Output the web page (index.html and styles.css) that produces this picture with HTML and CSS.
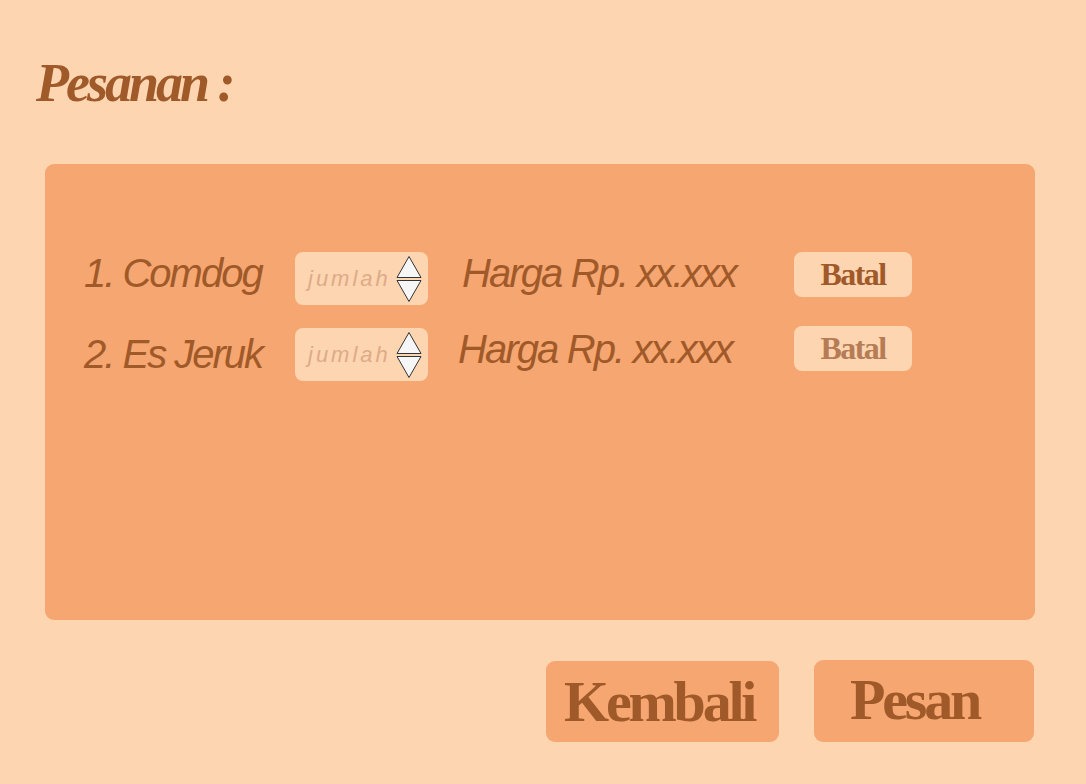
FILE: index.html
```html
<!DOCTYPE html>
<html lang="id">
<head>
<meta charset="utf-8">
<title>Pesanan</title>
<link rel="stylesheet" href="styles.css">
</head>
<body>
<div class="page">
  <h1 class="title">Pesanan :</h1>
  <div class="panel">
    <div class="row">
      <div class="name">1. Comdog</div>
      <div class="qty">
        <span class="qty-placeholder">jumlah</span>
        <svg class="spin" width="28" height="48" viewBox="0 0 28 48">
          <polygon points="14,1.5 2,22.5 26,22.5" fill="#f6f6f6" stroke="#333" stroke-width="1"/>
          <polygon points="2,25.5 26,25.5 14,46.5" fill="#f6f6f6" stroke="#333" stroke-width="1"/>
        </svg>
      </div>
      <div class="price">Harga Rp. xx.xxx</div>
      <div class="cancel">Batal</div>
    </div>
    <div class="row row-second">
      <div class="name">2. Es Jeruk</div>
      <div class="qty">
        <span class="qty-placeholder">jumlah</span>
        <svg class="spin" width="28" height="48" viewBox="0 0 28 48">
          <polygon points="14,1.5 2,22.5 26,22.5" fill="#f6f6f6" stroke="#333" stroke-width="1"/>
          <polygon points="2,25.5 26,25.5 14,46.5" fill="#f6f6f6" stroke="#333" stroke-width="1"/>
        </svg>
      </div>
      <div class="price">Harga Rp. xx.xxx</div>
      <div class="cancel cancel-muted">Batal</div>
    </div>
  </div>
  <div class="actions">
    <div class="btn btn-back">Kembali</div>
    <div class="btn btn-order">Pesan</div>
  </div>
</div>
</body>
</html>
```

FILE: styles.css
```css
html, body {
  margin: 0;
  padding: 0;
}
body {
  background: #fdd5b1;
  width: 1086px;
  height: 784px;
  overflow: hidden;
}
.page {
  display: flex;
  flex-direction: column;
  padding: 54px 0 0 0;
}
.title {
  margin: 0 0 0 36px;
  font-family: "Liberation Serif", "Times New Roman", serif;
  font-weight: bold;
  font-style: italic;
  font-size: 54px;
  line-height: 58px;
  letter-spacing: -3px;
  color: #a05a2a;
}
.panel {
  margin: 52px 0 0 45px;
  width: 990px;
  height: 456px;
  box-sizing: border-box;
  background: #f6a670;
  border-radius: 9px;
  padding: 88px 0 0 39px;
  display: flex;
  flex-direction: column;
  gap: 23px;
}
.row {
  display: flex;
  align-items: flex-start;
  height: 53px;
}
.name {
  width: 211px;
  flex-shrink: 0;
  font-family: "Liberation Sans", Arial, sans-serif;
  font-style: italic;
  font-size: 40px;
  line-height: 43px;
  letter-spacing: -2px;
  color: #a05a2a;
}
.row-second .name {
  margin-top: 5px;
}
.qty {
  width: 133px;
  height: 53px;
  flex-shrink: 0;
  box-sizing: border-box;
  background: #fdd5b1;
  border-radius: 8px;
  display: flex;
  align-items: center;
  padding: 0 5px 0 13px;
  justify-content: space-between;
}
.qty-placeholder {
  font-family: "Liberation Sans", Arial, sans-serif;
  font-style: italic;
  font-size: 22px;
  letter-spacing: 3px;
  color: #deaa88;
  white-space: nowrap;
}
.spin {
  display: block;
  flex-shrink: 0;
}
.price {
  width: 366px;
  flex-shrink: 0;
  box-sizing: border-box;
  padding-left: 34px;
  font-family: "Liberation Sans", Arial, sans-serif;
  font-style: italic;
  font-size: 40px;
  line-height: 43px;
  letter-spacing: -1.9px;
  color: #a05a2a;
  white-space: nowrap;
}
.row-second .price {
  padding-left: 30px;
}
.cancel {
  width: 118px;
  height: 45px;
  flex-shrink: 0;
  background: #fdd5b1;
  border-radius: 8px;
  text-align: center;
  font-family: "Liberation Serif", "Times New Roman", serif;
  font-weight: bold;
  font-size: 32px;
  line-height: 44px;
  letter-spacing: -1.6px;
  color: #a05a2a;
}
.row-second .cancel {
  margin-top: -2px;
}
.cancel-muted {
  color: #b57c56;
}
.actions {
  display: flex;
  justify-content: flex-end;
  gap: 35px;
  margin: 40px 52px 0 0;
}
.btn {
  background: #f6a670;
  border-radius: 9px;
  box-sizing: border-box;
  font-family: "Liberation Serif", "Times New Roman", serif;
  font-weight: bold;
  font-size: 58px;
  letter-spacing: -3.2px;
  color: #a05a2a;
  white-space: nowrap;
}
.btn-back {
  width: 233px;
  height: 81px;
  line-height: 81px;
  margin-top: 1px;
  padding-left: 18px;
}
.btn-order {
  width: 220px;
  height: 82px;
  line-height: 79px;
  padding-left: 36px;
}
```
